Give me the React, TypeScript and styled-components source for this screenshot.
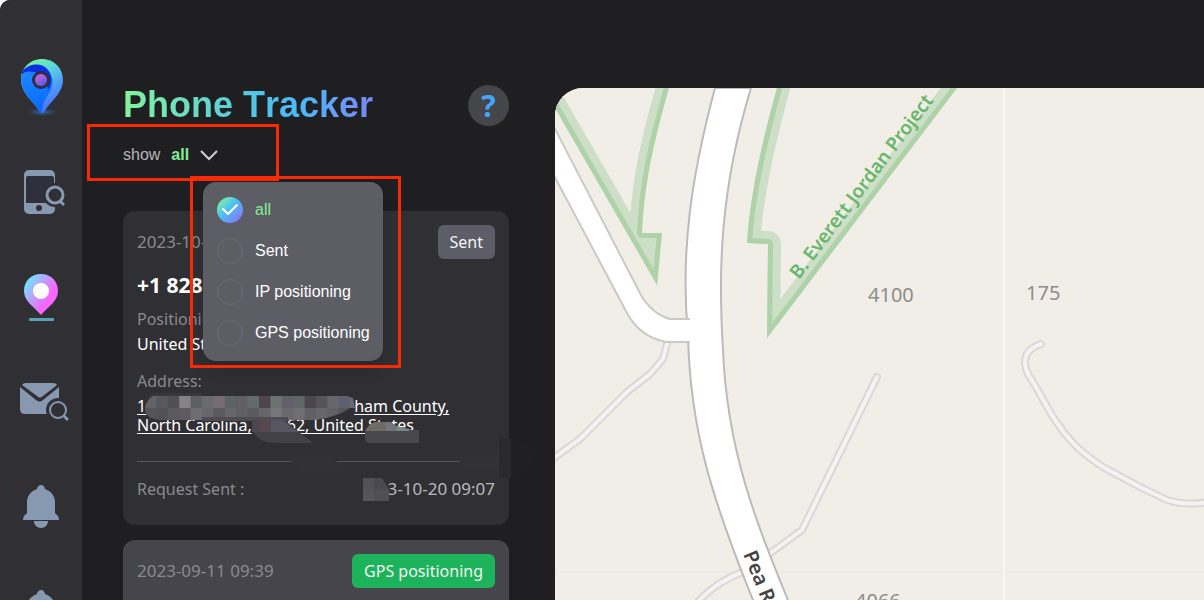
import React from "react";
import styled, { createGlobalStyle } from "styled-components";

const GlobalStyle = createGlobalStyle`
  * { box-sizing: border-box; }
  body { margin: 0; background: #fff; }
  button, input, fieldset { margin: 0; padding: 0; border: 0; font: inherit; color: inherit; background: none; }
`;

const sans = '"Liberation Sans", Arial, sans-serif';
const humanist = '"Noto Sans", "Open Sans", sans-serif';

const Page = styled.div`
  display: flex;
  height: 100vh;
  overflow: hidden;
  background: #1f1f21;
  border-top-left-radius: 10px;
  font-family: ${sans};
  font-size: 16px;
  color: #fff;
`;

const Sidebar = styled.nav`
  flex: 0 0 82px;
  display: flex;
  flex-direction: column;
  padding-top: 34px;
  overflow: hidden;
  background: #302f34;
`;

const NavButton = styled.button`
  flex: 0 0 105px;
  display: flex;
  align-items: center;
  justify-content: center;
  cursor: pointer;
`;

const Panel = styled.section`
  flex: 0 0 386px;
  margin-left: 41px;
  padding-top: 84px;
`;

const PanelHeader = styled.header`
  display: flex;
  align-items: center;
  justify-content: space-between;
  height: 42px;
`;

const Title = styled.h1`
  margin: 0;
  font-size: 36px;
  font-kerning: none;
  line-height: 42px;
  background: linear-gradient(95deg, #84f49c 0%, #50c4ea 55%, #4db8fa 70%, #7b86f8 100%);
  background-clip: text;
  -webkit-background-clip: text;
  color: transparent;
`;

const HelpButton = styled.button`
  width: 41px;
  height: 41px;
  border-radius: 50%;
  background: #45454c;
  color: #45a5f6;
  font-family: ${humanist};
  font-size: 30px;
  font-weight: 700;
  line-height: 41px;
  cursor: pointer;
`;

const Filter = styled.div`
  position: relative;
  display: flex;
  align-items: center;
  height: 57px;
  margin-bottom: 28px;
`;

const FilterButton = styled.button`
  display: flex;
  align-items: center;
  gap: 11px;
  line-height: 20px;
  color: #b6b6b8;
  cursor: pointer;
`;

const Current = styled.strong`
  color: #83ee97;
`;

const Menu = styled.fieldset`
  position: absolute;
  z-index: 3;
  top: 56px;
  left: 80px;
  width: 180px;
  padding: 7px 0 8px 14px;
  border-radius: 13px;
  background: #5d5d65;
  box-shadow: 0 8px 16px rgba(0, 0, 0, 0.15);
`;

const Option = styled.label`
  display: flex;
  align-items: center;
  gap: 12px;
  height: 41px;
  white-space: nowrap;
  cursor: pointer;
  &:has(input:checked) { color: #83ee97; }
`;

const OptionMark = styled.span`
  display: grid;
  flex: 0 0 26px;
  height: 26px;
  svg { grid-area: 1 / 1; pointer-events: none; }
`;

const Radio = styled.input`
  grid-area: 1 / 1;
  appearance: none;
  width: 26px;
  height: 26px;
  border: 1px solid #6c6c74;
  border-radius: 50%;
  &:checked {
    border: 0;
    background: linear-gradient(135deg, #86f3a0 8%, #4cc0f2 45%, #8a72fa 90%);
  }
`;

const Highlight = styled.div<{ $top: number; $left: number; $width: number; $height: number }>`
  position: absolute;
  z-index: 4;
  top: ${(p) => p.$top}px;
  left: ${(p) => p.$left}px;
  width: ${(p) => p.$width}px;
  height: ${(p) => p.$height}px;
  border: 3px solid #f82a06;
  pointer-events: none;
`;

const Card = styled.article<{ $active?: boolean }>`
  position: relative;
  padding: 14px 14px 24px;
  margin-bottom: 15px;
  border-radius: 12px;
  background: ${(p) => (p.$active ? "#45454b" : "#302f34")};
  font-family: ${humanist};
  line-height: 24px;
`;

const Row = styled.div`
  display: flex;
  align-items: center;
  justify-content: space-between;
`;

const Muted = styled.span`
  color: #8a8a8e;
`;

const Stamp = styled.time<{ $bright?: boolean }>`
  font-size: 17px;
  color: ${(p) => (p.$bright ? "#b9b9bc" : "#8a8a8e")};
`;

const Badge = styled.button<{ $tone: "grey" | "green" }>`
  height: 34px;
  padding: 0 12px;
  border-radius: 6px;
  background: ${(p) => (p.$tone === "green" ? "#1db35a" : "#5d5d67")};
  color: #f4f4f5;
  cursor: pointer;
`;

const Phone = styled.h2`
  margin: 14px 0 10px;
  font-size: 21px;
  line-height: 24px;
`;

const Field = styled.div`
  display: flex;
  flex-direction: column;
  gap: 1px;
  margin-bottom: 13px;
`;

const Address = styled.a`
  display: block;
  margin-top: 4px;
  line-height: 19px;
  color: #fff;
  text-underline-offset: 2px;
`;

const Hidden = styled.span<{ $width: number }>`
  display: inline-block;
  width: ${(p) => p.$width}px;
`;

const Divider = styled.hr`
  margin: 26px 0 15px;
  border: 0;
  border-top: 1px solid #55555a;
`;

const Mosaic = styled.svg`
  position: absolute;
  top: 0;
  left: 0;
  overflow: visible;
  pointer-events: none;
`;

const MapArea = styled.main`
  flex: 1;
  min-width: 0;
  margin: 88px 0 0 46px;
  overflow: hidden;
  border-top-left-radius: 28px;
  background: #f1eee8;
  svg { display: block; width: 100%; height: 100%; }
`;

const LogoIcon = () => (
  <svg width="46" height="62" viewBox="-2 -2 46 62">
    <defs>
      <linearGradient id="lgA" x1=".3" y1="0" x2=".8" y2="1">
        <stop offset="0" stopColor="#6ff5a0" />
        <stop offset=".3" stopColor="#59d6dc" />
        <stop offset=".6" stopColor="#4f9df8" />
        <stop offset="1" stopColor="#4c5cf5" />
      </linearGradient>
      <linearGradient id="lgB" x1="0" y1="0" x2=".4" y2="1">
        <stop offset="0" stopColor="#1e8cff" />
        <stop offset="1" stopColor="#0a6cff" />
      </linearGradient>
      <linearGradient id="lgC" x1=".2" y1="0" x2=".7" y2="1">
        <stop offset="0" stopColor="#d067d8" />
        <stop offset="1" stopColor="#5557ee" />
      </linearGradient>
      <radialGradient id="lgS">
        <stop offset="0" stopColor="#2b6aa8" stopOpacity=".9" />
        <stop offset="1" stopColor="#2b6aa8" stopOpacity="0" />
      </radialGradient>
    </defs>
    <ellipse cx="22" cy="54" rx="15" ry="4" fill="url(#lgS)" />
    <path d="M22 1C10 1 1 10 1 22c0 13 13 22 19 32q2 2 4 0c6-10 19-19 19-32C43 10 34 1 22 1Z" fill="url(#lgA)" />
    <path d="M2 15C8 5 22 5 28 12c6 8 6 16 0 25-4 6-6 11-6 18-1 0-1 0-2-1C14 44 1 35 1 22c0-3 0-5 1-7Z" fill="url(#lgB)" />
    <path d="M2 14C8 5 22 4 28 12c5 7 4 14 0 20-1-10-6-17-14-18-5-1-9-1-12 2Z" fill="#0c2de6" />
    <circle cx="21" cy="22" r="9" fill="#302f40" />
    <circle cx="21" cy="22" r="6" fill="url(#lgC)" />
  </svg>
);

const DeviceIcon = () => (
  <svg width="48" height="46" viewBox="-6 0 48 46" fill="none">
    <rect x="1" y="1" width="31" height="44" rx="5" fill="#8799b0" />
    <path d="M3 9q0-2 2-2h24q2 0 2 2v25H3Z" fill="#302f3c" />
    <circle cx="16" cy="39" r="3" fill="#302f34" />
    <circle cx="32" cy="26" r="12" fill="#302f34" />
    <circle cx="32" cy="26" r="8" stroke="#8799b0" strokeWidth="3" />
    <path d="m37 32 4 4" stroke="#8799b0" strokeWidth="3" />
  </svg>
);

const PinIcon = () => (
  <svg width="36" height="48" viewBox="0 0 36 48">
    <defs>
      <linearGradient id="pin" x1=".05" y1=".2" x2=".8" y2=".8">
        <stop offset="0" stopColor="#6fe2ff" />
        <stop offset=".45" stopColor="#c19bfb" />
        <stop offset=".8" stopColor="#f766ff" />
      </linearGradient>
    </defs>
    <path d="M18 1C8 1 1 8 1 18c0 10 9 15 17 24 8-9 17-14 17-24C35 8 28 1 18 1Z" fill="url(#pin)" />
    <circle cx="18" cy="18" r="8" fill="#fff" />
    <rect x="6" y="45" width="25" height="3" rx="1" fill="#57a3b5" />
  </svg>
);

const MailIcon = () => (
  <svg width="56" height="38" viewBox="-6 1 56 38" fill="none">
    <path d="M1 5 17 18q4 3 7 0L40 5v22q0 5-5 5H6q-5 0-5-5V6Z" fill="#8799b0" />
    <path d="M3 3q1-2 4-2h27q3 0 4 2L24 14q-3 3-6 0Z" fill="#8799b0" />
    <circle cx="39" cy="28" r="12" fill="#302f34" />
    <circle cx="39" cy="28" r="8" stroke="#8799b0" strokeWidth="2" />
    <path d="m45 34 4 4" stroke="#8799b0" strokeWidth="3" />
  </svg>
);

const BellIcon = () => (
  <svg width="38" height="44" viewBox="0 0 38 44" fill="#8799b0">
    <path d="M19 0c-2 0-4 2-4 4C9 6 5 11 5 17v11c0 1-4 2-4 7h36c0-5-4-6-4-7V17c0-6-4-11-10-13 0-2-2-4-4-4Z" />
    <path d="M12 36h14c0 4-3 7-7 7s-7-3-7-7Z" />
  </svg>
);

const topCells = ["#636367", "#59585d", "#505054", "#858388", "#5c6062", "#6a6a6d", "#766d72", "#5d6266", "#605f63", "#636b69", "#4e444c", "#6c7271", "#62616a", "#616669", "#4b454d", "#53555b", "#67666a", "#5f606f", "#6a6970"];
const lowCells = ["#55545a", "#515156", "#5a5a5e", "#5c5b60", "#6e6d70", "#67666b", "#5a5a5e", "#68666a", "#605f63", "#5b5b5f", "#656468", "#777678", "#6a6a6d", "#706e73", "#605f65", "#67666b", "#616066", "#57565d", "#504f56"];

const AddressMosaic = () => (
  <Mosaic width="386" height="314" aria-hidden="true">
    <defs>
      <clipPath id="smear">
        <path d="M22 198q0-8 8-13h194l6 2 2 10h-5q-8 6-24 10l-12 2H36q-14-2-14-11Z" />
      </clipPath>
    </defs>
    <path d="M22 192q2-8 10-10h47v5H22Z" fill="#38373c" />
    <g clipPath="url(#smear)">
      {topCells.map((c, i) => (
        <rect key={i} x={22 + i * 11.4} y="185" width="12" height="12" fill={c} />
      ))}
      {lowCells.map((c, i) => (
        <rect key={i} x={22 + i * 11.4} y="197" width="12" height="12" fill={c} />
      ))}
    </g>
    <path d="M79 206h86v4H79Z" fill="#4d4c51" />
    <path d="M129 209h34q4 6 14 12h-48Z" fill="#4a474e" />
    <path d="M137 209h11v12h-11Z" fill="#57474e" />
    <path d="M148 209h13q4 7 15 12h-28Z" fill="#57555f" />
    <path d="M130 221h46l14 11h-38q-16 0-22-11Z" fill="#414146" />
    <path d="M160 243h42q14 8 28 20h-48Z" fill="#323136" />
    <path d="M333 243h53v15h-45Z" fill="#323136" />
    <path d="M242 220q2-6 11-9h10l18 8h15v13h-50q-4 0-4-6Z" fill="#48474c" />
    <path d="M252 211h11v9h-21q4-7 10-9Z" fill="#6c6b65" />
    <path d="M263 211h4l7 4v5h-11Z" fill="#74747b" />
    <path d="M274 215l12 3v2h-12Z" fill="#7c8887" />
    <path d="M376 227h12v40h-12Z" fill="#2a292d" />
    <path d="M388 227q20 2 25 14 0 20-25 26Z" fill="#202022" />
    <path d="M232 266h9v24h-9Z" fill="#302f34" />
    <path d="M240 267h11v11h-11Z" fill="#515056" />
    <path d="M251 267q10 2 15 11h-15Z" fill="#4a494f" />
    <path d="M251 267h8l6 11h-14Z" fill="#4a494f" />
    <path d="M240 278h11v12h-11Z" fill="#59545a" />
    <path d="M251 278h15v12h-15Z" fill="#504f54" />
  </Mosaic>
);

const leftPark = "M555 108 657 285 662 233H642C644 190 651 150 669 88V40H515Z";
const rightPark = "M777 88C762 142 750 195 747 243L768 244 767 338 957 88V40H790Z";
const lanes = [
  "M668 340 663 359 650 374 627 392Q603 416 580 439L550 461",
  "M877 377 802 530 765 557",
  "M745 571Q715 582 696 604",
  "M1041 344Q1018 352 1028 374C1045 400 1050 418 1073 443Q1082 453 1103 467L1140 487 1167 500Q1186 506 1208 502",
];
const mainRoad = "M715 88C692 174 680 250 688 335C690 430 712 500 757 610H792C755 520 727 450 723 350C718 270 720 190 751 88Z";
const sideRoad = "M554 127 642 297Q654 315 670 319H700V342H666Q640 337 627 313L550 168Z";

const StreetMap = () => (
  <svg viewBox="555 88 649 512" preserveAspectRatio="xMinYMin slice" role="img" aria-label="Map" fontFamily='"Noto Sans", sans-serif'>
    <defs>
      <clipPath id="parkL"><path d={leftPark} /></clipPath>
      <clipPath id="parkR"><path d={rightPark} /></clipPath>
    </defs>
    <rect x="500" y="0" width="2400" height="1600" fill="#f1eee8" />
    <path d="M555 572H2900" stroke="#e8e7e3" />
    <path d="M1004 88V1600" stroke="#f8f7f4" strokeWidth="2" />
    {[["parkL", leftPark], ["parkR", rightPark]].map(([id, d]) => (
      <g key={id} clipPath={`url(#${id})`} fill="none" strokeLinejoin="round">
        <path d={d} stroke="#cddfc7" strokeWidth="26" />
        <path d={d} stroke="#afd2a9" strokeWidth="10" />
      </g>
    ))}
    <g fill="none" strokeLinecap="round" strokeLinejoin="round">
      {lanes.map((d) => <path key={d} d={d} stroke="#d9d8d6" strokeWidth="8" />)}
      {lanes.map((d) => <path key={d} d={d} stroke="#f4f3f1" strokeWidth="4" />)}
    </g>
    <path d={mainRoad} fill="#fff" stroke="#bcbbb9" strokeWidth="2" />
    <path d={sideRoad} fill="#fff" stroke="#cac9c6" strokeWidth="2" />
    <path d="M686 320h18v21h-18Z" fill="#fff" />
    <path d="M690 316h14v30h-14Z" fill="#fff" />
    <text transform="translate(799 280) rotate(-53)" fontSize="19" fontWeight="600" fill="#68b76a">B. Everett Jordan Project</text>
    <text transform="translate(743 554) rotate(68)" fontSize="20" fontWeight="600" fill="#444">Pea Ridge Road</text>
    <g fontSize="20" fill="#8e8d8b">
      <text x="868" y="302">4100</text>
      <text x="1026" y="300">175</text>
      <text x="855" y="608">4066</text>
    </g>
  </svg>
);

const navItems = [
  { label: "Home", Icon: LogoIcon },
  { label: "Device lookup", Icon: DeviceIcon },
  { label: "Phone Tracker", Icon: PinIcon },
  { label: "Mail lookup", Icon: MailIcon },
  { label: "Notifications", Icon: BellIcon },
  { label: "Alerts", Icon: BellIcon },
];

const options = ["all", "Sent", "IP positioning", "GPS positioning"];

export default function App() {
  const [selected, setSelected] = React.useState("all");
  return (
    <>
      <GlobalStyle />
      <Page>
        <Sidebar>
          {navItems.map(({ label, Icon }) => (
            <NavButton key={label} aria-label={label}><Icon /></NavButton>
          ))}
        </Sidebar>
        <Panel>
          <PanelHeader>
            <Title>Phone Tracker</Title>
            <HelpButton aria-label="Help">?</HelpButton>
          </PanelHeader>
          <Filter>
            <FilterButton aria-haspopup="true" aria-expanded="true">
              <span>show</span>
              <Current>{selected}</Current>
              <svg width="18" height="12" viewBox="0 0 18 12" fill="none" stroke="#d0d0d2" strokeWidth="2">
                <path d="m1 2 8 8 8-8" />
              </svg>
            </FilterButton>
            <Menu aria-label="Show">
              {options.map((option) => (
                <Option key={option}>
                  <OptionMark>
                    <Radio type="radio" name="show" checked={selected === option} onChange={() => setSelected(option)} />
                    {selected === option && (
                      <svg width="26" height="26" viewBox="0 0 26 26" fill="none" stroke="#fff" strokeWidth="2">
                        <path d="m6 12 5 5 9-9" strokeLinecap="round" strokeLinejoin="round" />
                      </svg>
                    )}
                  </OptionMark>
                  {option}
                </Option>
              ))}
            </Menu>
            <Highlight $top={-2} $left={-36} $width={192} $height={57} />
            <Highlight $top={50} $left={67} $width={211} $height={192} />
          </Filter>
          <Card>
            <Row>
              <Stamp>2023-10-20</Stamp>
              <Badge $tone="grey">Sent</Badge>
            </Row>
            <Phone>+1 828</Phone>
            <Field>
              <Muted>Positioning:</Muted>
              <span>United States</span>
            </Field>
            <Muted>Address:</Muted>
            <Address href="#address">
              1<Hidden $width={208} />ham County,
              <br />
              North Carolina,<Hidden $width={35} />62, United States
            </Address>
            <Divider />
            <Row>
              <Muted>Request Sent :</Muted>
              <Stamp $bright>2023-10-20 09:07</Stamp>
            </Row>
            <AddressMosaic />
          </Card>
          <Card $active>
            <Row>
              <Stamp>2023-09-11 09:39</Stamp>
              <Badge $tone="green">GPS positioning</Badge>
            </Row>
            <Phone>+1 828</Phone>
          </Card>
        </Panel>
        <MapArea><StreetMap /></MapArea>
      </Page>
    </>
  );
}
